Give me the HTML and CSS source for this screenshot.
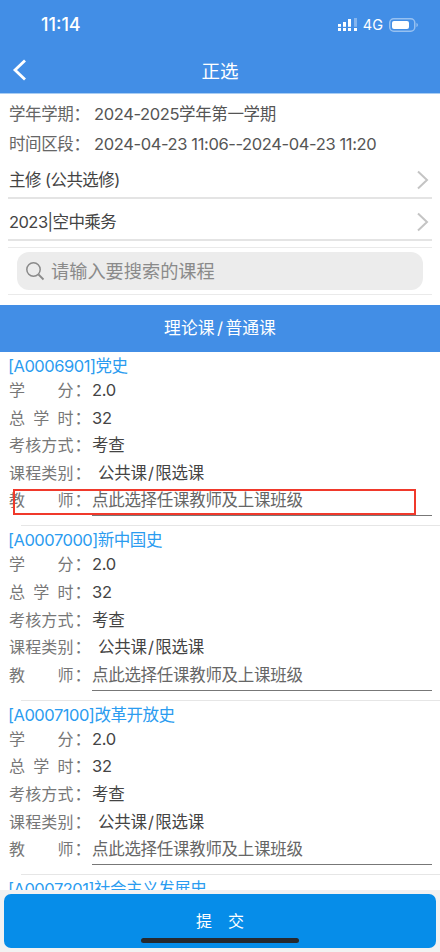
FILE: index.html
```html
<!DOCTYPE html>
<html lang="zh-CN">
<head>
<meta charset="utf-8">
<title>正选</title>
<link rel="stylesheet" href="styles.css">
</head>
<body>
<header class="top">
  <div class="status">
    <span class="clock">11:14</span>
    <div class="status-right">
      <svg class="signal" width="19" height="13" viewBox="0 0 19 13"><g fill="#fff"><rect x="0" y="6" width="3" height="2.800"/><rect x="0" y="10" width="3" height="3"/><rect x="5" y="4" width="3" height="4.800"/><rect x="5" y="10" width="3" height="3"/><rect x="10" y="1" width="3" height="7.800"/><rect x="10" y="10" width="3" height="3"/><rect x="16" y="10" width="3" height="3"/></g><rect x="16" y="0" width="3" height="8.800" fill="#fff" opacity=".35"/></svg>
      <span class="net">4G</span>
      <svg class="battery" width="29" height="14" viewBox="0 0 29 14"><rect x=".75" y=".75" width="25" height="12.500" rx="4" fill="none" stroke="#fff" stroke-opacity=".45" stroke-width="1.500"/><rect x="3" y="3" width="17" height="8" rx="2" fill="#fff"/><path d="M27.500 5v4c.8-.3 1.300-1.100 1.300-2s-.5-1.700-1.300-2z" fill="#fff" fill-opacity=".5"/></svg>
    </div>
  </div>
  <div class="nav">
    <svg class="back" width="14" height="22" viewBox="0 0 14 22"><path d="M13 1.500 3 11l10 9.500" fill="none" stroke="#fff" stroke-width="2.800"/></svg>
    <span class="nav-title">正选</span>
  </div>
</header>

<section class="info">
  <div class="info-row"><span class="info-label">学年学期：</span><span>2024-2025学年第一学期</span></div>
  <div class="info-row"><span class="info-label">时间区段：</span><span>2024-04-23 11:06--2024-04-23 11:20</span></div>
</section>

<div class="picker picker-first"><span>主修 (公共选修)</span><svg width="14" height="20" viewBox="0 0 14 20"><path d="M2 1.500 11 10l-9 8.500" fill="none" stroke="#c4c4c4" stroke-width="2"/></svg></div>
<div class="picker picker-second"><span>2023|空中乘务</span><svg width="14" height="20" viewBox="0 0 14 20"><path d="M2 1.500 11 10l-9 8.500" fill="none" stroke="#c4c4c4" stroke-width="2"/></svg></div>

<div class="search-wrap">
  <div class="search">
    <svg width="20" height="20" viewBox="0 0 20 20"><circle cx="8.500" cy="8.500" r="6.700" fill="none" stroke="#8a8a8a" stroke-width="1.500"/><path d="m13.500 13.500 5 5" stroke="#8a8a8a" stroke-width="1.800" fill="none"/></svg>
    <span>请输入要搜索的课程</span>
  </div>
</div>

<div class="band">理论课<span class="slash">/</span>普通课</div>

<main class="list">
  <article class="course">
    <a class="course-title">[A0006901]党史</a>
    <div class="row"><span class="key">学分</span><span class="colon">：</span><span>2.0</span></div>
    <div class="row"><span class="key">总学时</span><span class="colon">：</span><span>32</span></div>
    <div class="row"><span class="key">考核方式</span><span class="colon">：</span><span>考查</span></div>
    <div class="row"><span class="key">课程类别</span><span class="colon">：</span><span class="kind">公共课<span class="slash">/</span>限选课</span></div>
    <div class="row"><span class="key">教师</span><span class="colon">：</span><span class="teacher">点此选择任课教师及上课班级</span></div>
    <div class="highlight"></div>
  </article>
  <article class="course">
    <a class="course-title">[A0007000]新中国史</a>
    <div class="row"><span class="key">学分</span><span class="colon">：</span><span>2.0</span></div>
    <div class="row"><span class="key">总学时</span><span class="colon">：</span><span>32</span></div>
    <div class="row"><span class="key">考核方式</span><span class="colon">：</span><span>考查</span></div>
    <div class="row"><span class="key">课程类别</span><span class="colon">：</span><span class="kind">公共课<span class="slash">/</span>限选课</span></div>
    <div class="row"><span class="key">教师</span><span class="colon">：</span><span class="teacher">点此选择任课教师及上课班级</span></div>
  </article>
  <article class="course">
    <a class="course-title">[A0007100]改革开放史</a>
    <div class="row"><span class="key">学分</span><span class="colon">：</span><span>2.0</span></div>
    <div class="row"><span class="key">总学时</span><span class="colon">：</span><span>32</span></div>
    <div class="row"><span class="key">考核方式</span><span class="colon">：</span><span>考查</span></div>
    <div class="row"><span class="key">课程类别</span><span class="colon">：</span><span class="kind">公共课<span class="slash">/</span>限选课</span></div>
    <div class="row"><span class="key">教师</span><span class="colon">：</span><span class="teacher">点此选择任课教师及上课班级</span></div>
  </article>
  <article class="course course-last">
    <a class="course-title">[A0007201]社会主义发展史</a>
  </article>
</main>

<footer class="footer">
  <button class="submit">提　交</button>
  <div class="home"></div>
</footer>
</body>
</html>
```

FILE: styles.css
```css
* { box-sizing: border-box; }
html, body { margin: 0; height: 952px; overflow: hidden; }
body {
  background: #fff;
  color: #444;
  font: 16.500px/24px Inter, "Noto Sans CJK SC", sans-serif;
  letter-spacing: -0.3px;
  position: relative;
}
.top { background: #428ee6; height: 94px; color: #fff; border-bottom: 1px solid #a9cdf3; }
.status { height: 48px; display: flex; align-items: center; justify-content: space-between; padding: 1px 22px 0 41px; }
.clock { font: 500 18px/24px Inter, "Liberation Sans", sans-serif; letter-spacing: 0; }
.status-right { display: flex; align-items: center; }
.signal { margin-right: 6px; }
.net { font-size: 14.500px; margin-right: 6px; letter-spacing: 0; }
.nav { height: 45px; position: relative; display: flex; align-items: center; justify-content: center; }
.back { position: absolute; left: 12px; top: 11px; }
.nav-title { font-size: 18.500px; letter-spacing: 0; }

.info { padding: 6px 9px 0; height: 66px; }
.info-row { height: 30px; line-height: 29px; display: flex; color: #555; letter-spacing: -0.38px; }
.info-label { width: 85px; color: #666; white-space: nowrap; }

.picker { height: 39px; margin: 0 8px; display: flex; align-items: center; justify-content: space-between; border-bottom: 2px solid #e4e4e4; padding: 3px 1px 0; color: #444; letter-spacing: -0.55px; }
.picker-second { height: 42px; padding-top: 6px; }
.picker svg { margin-right: 1px; }

.search-wrap { margin: 6px 8px 0; height: 48px; border-top: 1px solid #eaeaea; border-bottom: 1px solid #eaeaea; padding-top: 4px; }
.search { margin: 0 9px; height: 38px; border-radius: 12px; background: #ececec; color: #8a8a8a; display: flex; align-items: center; gap: 6px; padding-left: 8px; font-size: 18.200px; letter-spacing: 0; }

.band { margin-top: 10px; height: 47px; background: #428ee6; color: #fff; text-align: center; line-height: 47px; font-size: 16.800px; letter-spacing: 0; }
.band .slash { margin: 0 2.500px; }

.course { position: relative; height: 174.400px; padding: 0 8px 0 9px; }
.course::after { content: ""; position: absolute; left: 21px; right: 0; bottom: 0; height: 1px; background: #e6e6e6; }
.course-title { display: block; color: #2b9cf0; height: 25px; line-height: 28px; margin-left: -1px; white-space: nowrap; letter-spacing: -0.48px; }
.row { display: flex; height: 27.600px; line-height: 27px; color: #444; }
.key { width: 64.500px; font-size: 16px; letter-spacing: 0; text-align: justify; text-align-last: justify; color: #777; word-break: break-all; }
.colon { width: 18.500px; padding-left: 1px; color: #777; }
.kind { margin-left: 6px; }
.slash { margin: 0 1.500px; }
.teacher { flex: 1; color: #666; height: 29px; border-bottom: 1px solid #777; }
.highlight { position: absolute; left: 13px; top: 137px; width: 403px; height: 26px; border: 2px solid #f0392b; }

.footer { position: fixed; left: 0; right: 0; bottom: 0; height: 62px; background: #f2f2f2; padding: 4px; }
.submit { display: block; width: 100%; height: 54px; border: 0; border-radius: 7px; background: #068de9; color: #fff; font: 16px/24px Inter, "Noto Sans CJK SC", sans-serif; padding: 0; }
.home { position: absolute; left: 141px; top: 48px; width: 158px; height: 5px; border-radius: 3px; background: #26292e; }
```
